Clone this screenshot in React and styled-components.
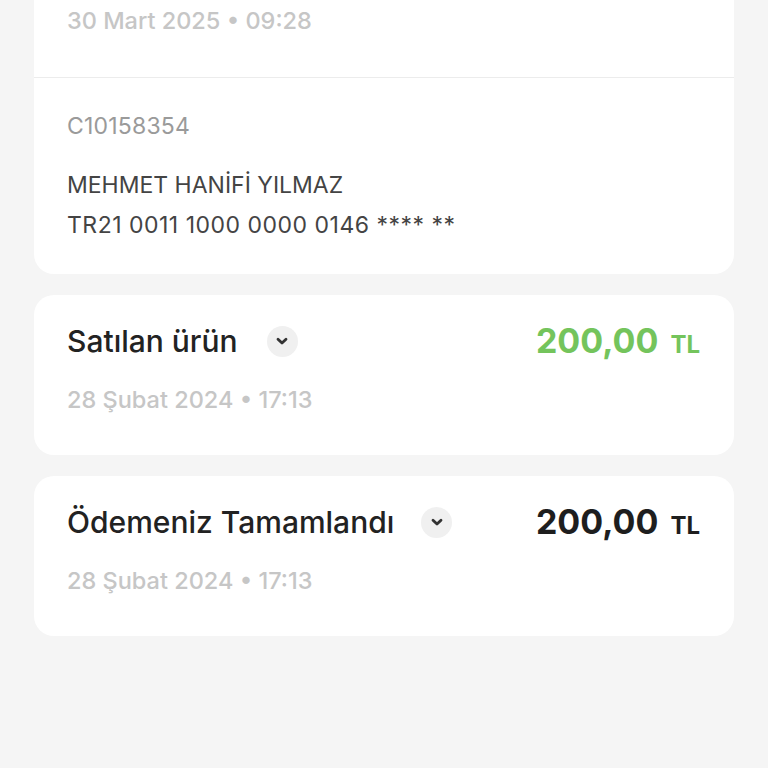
import React from "react";
import styled, { createGlobalStyle } from "styled-components";

const Global = createGlobalStyle`
  html, body { margin: 0; padding: 0; background: #f5f5f5; }
  body { font-family: Inter, "Noto Sans", sans-serif; -webkit-font-smoothing: antialiased; }
`;

const Page = styled.div`
  width: 768px;
  height: 768px;
  overflow: hidden;
  background: #f5f5f5;
  padding: 0 34px;
  box-sizing: border-box;
  display: flex;
  flex-direction: column;
  gap: 21px;
`;

const Card = styled.div`
  background: #ffffff;
  border-radius: ${(p) => (p.$cut ? "0 0 20px 20px" : "20px")};
  display: flex;
  flex-direction: column;
`;

const Section = styled.div`
  padding: ${(p) => p.$pad};
  display: flex;
  flex-direction: column;
  border-top: ${(p) => (p.$divider ? "1px solid #ececec" : "none")};
`;

const DateText = styled.div`
  font-size: 23.5px;
  font-weight: 500;
  color: #c6c6c6;
  line-height: 28px;
`;

const Code = styled.div`
  font-size: 23px;
  font-weight: 400;
  color: #9a9a9a;
  line-height: 28px;
  margin-bottom: 25px;
  letter-spacing: 0.2px;
`;

const Line = styled.div`
  font-size: 23px;
  font-weight: 400;
  color: #444444;
  line-height: 40px;
  letter-spacing: ${(p) => p.$ls || "0"};
`;

const Row = styled.div`
  display: flex;
  align-items: center;
  justify-content: space-between;
  margin-bottom: 25px;
`;

const TitleWrap = styled.div`
  display: flex;
  align-items: center;
  gap: ${(p) => p.$gap}px;
`;

const Title = styled.div`
  font-size: 30px;
  font-weight: 500;
  color: #222222;
  line-height: 36px;
`;

const Chevron = styled.div`
  width: 31px;
  height: 31px;
  border-radius: 50%;
  background: #f0f0f0;
  display: flex;
  align-items: center;
  justify-content: center;
`;

const Amount = styled.div`
  display: flex;
  align-items: baseline;
  gap: 12px;
  margin-right: 1px;
  color: ${(p) => p.$color};
  font-weight: 700;
`;

const Value = styled.span`
  font-size: 34px;
  line-height: 40px;
`;

const Unit = styled.span`
  font-size: 24px;
`;

const ChevronIcon = () => (
  <svg width="16" height="16" viewBox="0 0 16 16">
    <path d="M4 6.2 L8 10 L12 6.2" fill="none" stroke="#333" strokeWidth="2.8" strokeLinecap="round" strokeLinejoin="round" />
  </svg>
);

const Tx = ({ title, color, date, gap }) => (
  <Card>
    <Section $pad="26px 33px 41px 33px">
      <Row>
        <TitleWrap $gap={gap}>
          <Title>{title}</Title>
          <Chevron><ChevronIcon /></Chevron>
        </TitleWrap>
        <Amount $color={color}>
          <Value>200,00</Value>
          <Unit>TL</Unit>
        </Amount>
      </Row>
      <DateText>{date}</DateText>
    </Section>
  </Card>
);

export default function App() {
  return (
    <>
      <Global />
      <Page>
        <Card $cut>
          <Section $pad="7px 33px 42px 33px">
            <DateText>30 Mart 2025 • 09:28</DateText>
          </Section>
          <Section $divider $pad="34px 33px 29px 33px">
            <Code>C10158354</Code>
            <Line>MEHMET HANİFİ YILMAZ</Line>
            <Line $ls="0.5px">TR21 0011 1000 0000 0146 **** **</Line>
          </Section>
        </Card>
        <Tx title="Satılan ürün" color="#74c45c" date="28 Şubat 2024 • 17:13" gap={29} />
        <Tx title="Ödemeniz Tamamlandı" color="#1e1e1e" date="28 Şubat 2024 • 17:13" gap={27} />
      </Page>
    </>
  );
}
